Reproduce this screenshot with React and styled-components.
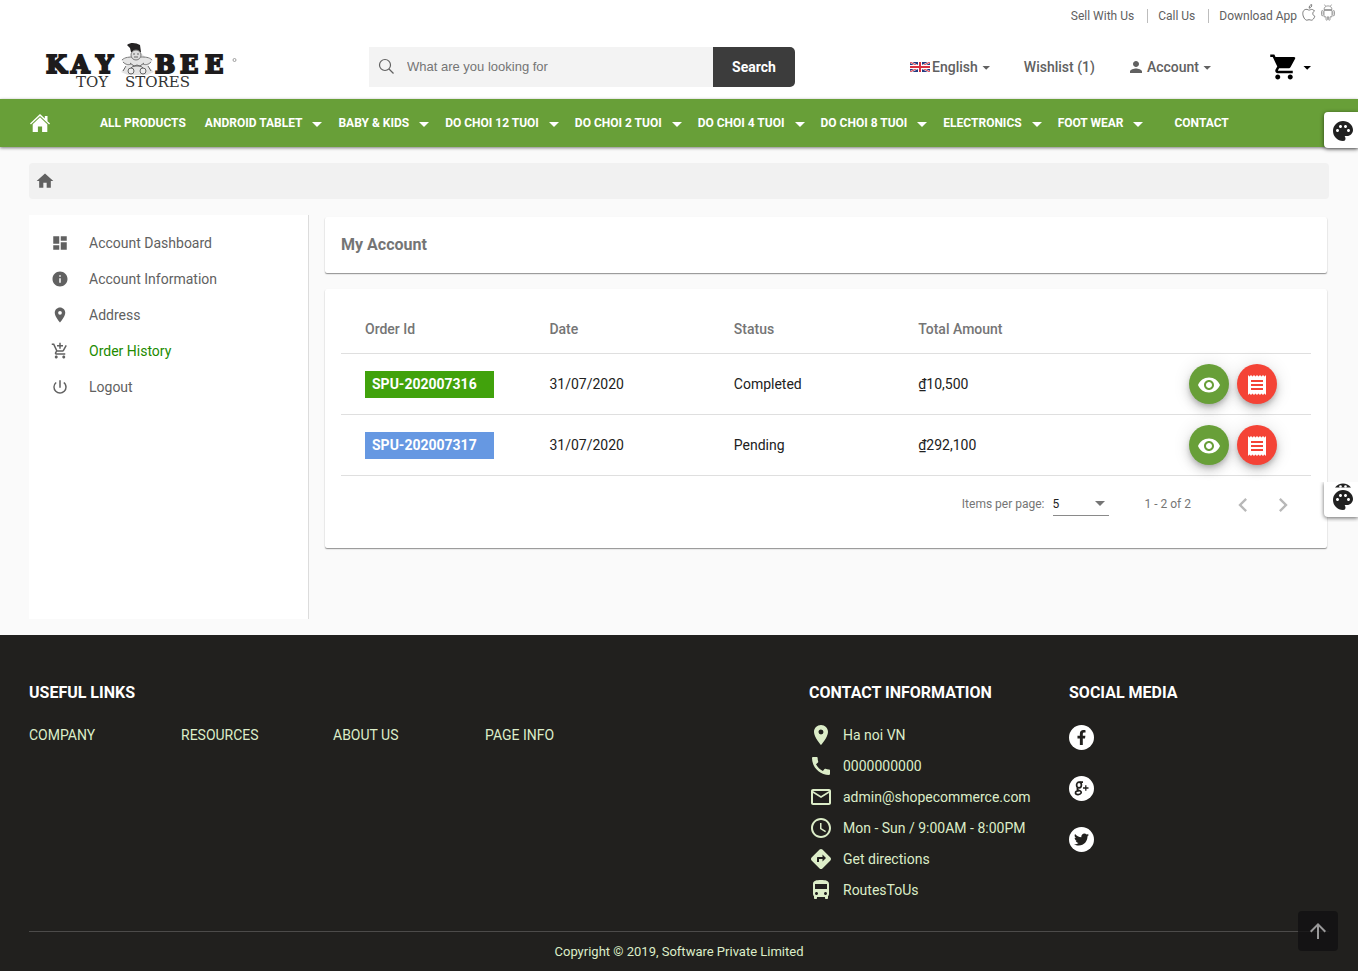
import React from "react";
import styled, { createGlobalStyle, css } from "styled-components";
import {
  MdDashboard, MdInfo, MdPlace, MdOutlineAddShoppingCart, MdPowerSettingsNew, MdHome, MdPerson,
  MdShoppingCart, MdVisibility, MdReceipt, MdPalette, MdChevronLeft, MdChevronRight, MdCall,
  MdMailOutline, MdAccessTime, MdDirections, MdDirectionsBus, MdArrowUpward,
} from "react-icons/md";
import { FaFacebookF, FaTwitter } from "react-icons/fa";

const GlobalStyle = createGlobalStyle`
  * { box-sizing: border-box; }
  body {
    margin: 0;
    background: #fafafa;
    color: #212121;
    font-family: Roboto, "Liberation Sans", sans-serif;
    font-size: 14px;
  }
  a { color: inherit; text-decoration: none; }
  button { font: inherit; color: inherit; border: 0; padding: 0; background: none; cursor: pointer; }
  h1, h2, h3, p, ul { margin: 0; padding: 0; }
  li { list-style: none; }
  svg { display: block; flex: none; }
`;

const Header = styled.header`background: #fff;`;

const TopBar = styled.div`
  display: flex;
  justify-content: flex-end;
  align-items: center;
  height: 32px;
  padding-right: 23px;
  font-size: 12px;
  line-height: 14px;
  color: #616161;
`;
const TopLink = styled.a`
  padding: 0 13px 0 10px;
  border-right: 1px solid #bdbdbd;
`;
const AppLinks = styled.div`
  display: flex;
  align-items: center;
  gap: 5px;
  padding-left: 10px;
`;
const StoreLink = styled.a`padding-bottom: 8px;`;

const MainBar = styled.div`
  display: flex;
  align-items: center;
  padding: 8px 45px 6px;
  height: 67px;
`;
const LogoLink = styled.a`
  flex: 0 0 324px;
`;
const SearchForm = styled.form`
  display: flex;
  flex: 0 1 426px;
  height: 40px;
`;
const SearchLabel = styled.label`
  display: flex;
  flex: 1;
  align-items: center;
  gap: 12px;
  padding-left: 9px;
  background: #f3f3f3;
`;
const SearchInput = styled.input`
  flex: 1;
  min-width: 0;
  border: 0;
  padding: 0;
  outline: 0;
  background: none;
  font: 13px "Liberation Sans", sans-serif;
  &::placeholder { color: #757575; opacity: 1; }
`;
const SearchButton = styled.button`
  width: 82px;
  border-radius: 0 5px 5px 0;
  background: #3c3c3c;
  color: #fff;
  font-weight: 700;
`;
const UserTools = styled.div`
  display: flex;
  flex: 1;
  justify-content: flex-end;
  align-items: center;
  gap: 32px;
  color: #616161;
  font-weight: 500;
`;
const ToolButton = styled.button`
  display: flex;
  align-items: center;
  gap: 2px;
  font-weight: 500;
`;
const CartButton = styled(ToolButton)`
  margin-left: 24px;
  color: #000;
`;

const Nav = styled.nav`
  position: relative;
  display: flex;
  align-items: center;
  height: 48px;
  padding-left: 30px;
  background: #689f38;
  color: #fff;
  font-size: 12px;
  font-weight: 700;
  box-shadow: 0 1px 3px rgba(0, 0, 0, 0.5);
`;
const NavHome = styled.a`margin-right: 40px;`;
const NavLink = styled.a`
  padding: 0 11px 0 ${(p) => (p.$wide ? 23 : 10)}px;
`;
const NavMenu = styled.button`
  display: flex;
  align-items: center;
  gap: 10px;
  padding: 0 8px;
  font-weight: 700;
`;

const Page = styled.main`padding: 16px 29px;`;
const Crumbs = styled.nav`
  display: flex;
  align-items: center;
  height: 36px;
  padding-left: 6px;
  border-radius: 4px;
  background: #f1f1f1;
  color: #616161;
`;
const Columns = styled.div`
  display: flex;
  gap: 16px;
  margin-top: 16px;
`;
const Sidebar = styled.nav`
  flex: 0 0 280px;
  min-height: 404px;
  padding: 10px 0;
  background: #fff;
  border-right: 1px solid #dcdcdc;
`;
const SideLink = styled.a`
  display: flex;
  align-items: center;
  gap: 20px;
  height: 36px;
  padding-left: 22px;
  color: ${(p) => (p.$active ? "#228b00" : "#616161")};
  svg { color: #616161; }
`;
const Content = styled.div`
  flex: 1;
  min-width: 0;
  padding: 2px 2px 0 0;
`;
const Card = styled.section`
  margin-bottom: 16px;
  padding: 16px;
  background: #fff;
  border-radius: 2px;
  box-shadow: 0 1px 1px rgba(0, 0, 0, 0.35), 0 1px 2px rgba(0, 0, 0, 0.12);
`;
const CardTitle = styled.h1`
  font-size: 16px;
  line-height: 24px;
  font-weight: 700;
  color: #757575;
`;
const Table = styled.table`
  display: block;
  width: 100%;
  thead, tbody { display: block; }
`;
const Row = styled.tr`
  display: grid;
  grid-template-columns: repeat(5, 1fr);
  align-items: center;
  height: ${(p) => (p.$head ? 49 : 61)}px;
  padding: 0 24px;
  border-bottom: 1px solid #dfdfdf;
`;
const HeadCell = styled.th`
  padding: 0;
  text-align: left;
  font-weight: 500;
  color: #757575;
`;
const Cell = styled.td`padding: 0;`;
const OrderTag = styled.span`
  display: block;
  width: 129px;
  padding: 0 7px;
  line-height: 27px;
  font-weight: 700;
  color: #fff;
  background: ${(p) => (p.$pending ? "#6698e2" : "#41a20c")};
`;
const Actions = styled.div`
  display: flex;
  justify-content: flex-end;
  gap: 8px;
  padding-right: 10px;
`;
const RoundButton = styled.button`
  display: grid;
  place-items: center;
  width: 40px;
  height: 40px;
  padding-top: 2px;
  border-radius: 50%;
  color: #fff;
  background: ${(p) => (p.$warn ? "#f44336" : "#689f38")};
  box-shadow: 0 3px 5px -1px rgba(0, 0, 0, 0.2), 0 6px 10px rgba(0, 0, 0, 0.14), 0 1px 18px rgba(0, 0, 0, 0.12);
`;
const Paginator = styled.div`
  display: flex;
  justify-content: flex-end;
  align-items: center;
  height: 56px;
  padding-right: 8px;
  font-size: 12px;
  color: #757575;
`;
const PageSize = styled.label`
  display: flex;
  align-items: center;
  gap: 8px;
`;
const SelectBox = styled.span`
  display: flex;
  align-items: center;
  width: 56px;
  height: 24px;
  border-bottom: 1px solid #8a8a8a;
`;
const SizeSelect = styled.select`
  appearance: none;
  flex: 1;
  min-width: 0;
  border: 0;
  padding: 0;
  background: none;
  font: inherit;
  color: #212121;
`;
const SelectArrow = styled.svg`margin-right: 4px;`;
const Range = styled.span`margin: 0 32px 0 36px;`;
const PageButton = styled.button`
  display: grid;
  place-items: center;
  width: 40px;
  height: 40px;
  padding-top: 2px;
  color: #b8b8b8;
`;

const Footer = styled.footer`
  padding: 47px 29px 11px;
  background: #21201e;
  color: #dcedc8;
`;
const FooterGrid = styled.div`
  display: grid;
  grid-template-columns: 60% 20% 20%;
  min-height: 249px;
`;
const FooterTitle = styled.h2`
  margin-bottom: 15px;
  font-size: 16px;
  line-height: 22px;
  font-weight: 700;
  color: #fff;
`;
const LinkColumns = styled.div`
  display: grid;
  grid-template-columns: repeat(5, 1fr);
  padding-right: 20px;
  line-height: 33px;
`;
const ContactRow = styled.li`
  display: flex;
  align-items: center;
  gap: 10px;
  height: 31px;
  white-space: nowrap;
`;
const SocialList = styled.div`
  display: flex;
  flex-direction: column;
  gap: 26px;
  padding-top: 6px;
`;
const SocialLink = styled.a`
  display: grid;
  place-items: center;
  width: 25px;
  height: 25px;
  border-radius: 50%;
  background: #fff;
  color: #21201e;
`;
const Copyright = styled.p`
  padding-top: 11px;
  border-top: 1px solid #4c4b4a;
  font-size: 13px;
  line-height: 17px;
  text-align: center;
`;

const PaletteTab = styled.button`
  position: fixed;
  right: 0;
  top: ${(p) => (p.$lower ? 482 : 112)}px;
  display: flex;
  flex-direction: column;
  align-items: center;
  justify-content: flex-end;
  width: 34px;
  height: ${(p) => (p.$lower ? 35 : 36)}px;
  padding: 0 0 5px 4px;
  background: #fff;
  color: #212121;
  border-radius: 4px 0 0 4px;
  box-shadow: 0 1px 4px rgba(0, 0, 0, 0.6);
  ${(p) => p.$lower && css`
    border-radius: 0 0 0 4px;
    clip-path: inset(0 0 -5px -5px);
  `}
`;
const ScrollTop = styled.button`
  position: fixed;
  right: 20px;
  bottom: 20px;
  display: grid;
  place-items: center;
  width: 40px;
  height: 40px;
  border-radius: 4px;
  background: rgba(18, 16, 18, 0.8);
  color: #9a999a;
`;

function Caret() {
  return (
    <svg width="12" height="8" viewBox="0 0 12 8" aria-hidden="true">
      <path d="M2.500 3h7.500L6.200 6.800z" fill="currentColor" />
    </svg>
  );
}

function NavArrow() {
  return (
    <svg width="10" height="7" viewBox="0 0 10 7" aria-hidden="true">
      <path d="M0 2h10L5 7z" fill="currentColor" />
    </svg>
  );
}

function PaletteTop() {
  return (
    <svg width="24" height="7" viewBox="0 0 24 7" aria-hidden="true">
      <path d="M4 6.500C6 3.600 9 2.500 12 2.500s6 1.100 8 4z" fill="currentColor" />
      <circle cx="9.500" cy="5.500" r="1.300" fill="#fff" />
      <circle cx="14.500" cy="5.500" r="1.300" fill="#fff" />
    </svg>
  );
}

function Logo() {
  return (
    <svg width="194" height="50" viewBox="0 -2 194 50" role="img" aria-label="Kay Bee Toy Stores">
      <g fontFamily="'DejaVu Serif', serif" fill="#1d1b1c">
        <g fontSize="24" fontWeight="700" stroke="#1d1b1c" strokeWidth="2">
          <text x="1" y="29">K</text>
          <text x="26" y="29">A</text>
          <text x="51" y="29">Y</text>
          <text x="110" y="29">B</text>
          <text x="135" y="29">E</text>
          <text x="160" y="29">E</text>
        </g>
        <text x="31" y="43" fontSize="15" fill="#333">TOY</text>
        <text x="80" y="43" fontSize="15" fill="#333">STORES</text>
      </g>
      <circle cx="189.500" cy="16" r="1.500" fill="none" stroke="#888" strokeWidth=".8" />
      <path d="M76 28l6-6-6-6 9-3 4-4h7l4 4 8 3-5 6 6 6-7 3H83z" fill="#e4e4e4" />
      <path d="M77 16c3-3 8-3 11-3M107 16c-3-3-7-3-11-3M78 18c3 3 6 3 8 2M106 18c-3 3-6 3-8 2" fill="none" stroke="#777" />
      <path d="M82 1c4-3 9-2 13 0l1 7H86l-1-4z" fill="#252324" />
      <circle cx="91" cy="11" r="5" fill="#ddd" stroke="#777" />
      <path d="M88 10h2M92 10h2M89 13h4M85 19l4 3h6l4-3M84 26l3-3 5-2 5 2 3 3M81 22l-3 5M103 22l3 5" fill="none" stroke="#666" />
      <circle cx="86" cy="27" r="3" fill="#eee" stroke="#666" />
      <circle cx="98" cy="27" r="3" fill="#eee" stroke="#666" />
    </svg>
  );
}

function AppleIcon() {
  return (
    <svg width="14" height="17" viewBox="0 0 14 17" fill="none" stroke="#777" aria-hidden="true">
      <path d="M12.500 7c-1-1.500-2.800-1.900-4-1.300-1 .5-1.700.5-2.600 0C3.500 4.600.800 6.200.8 9.500c0 3 2.100 6.700 4 6.700.8 0 1.300-.5 2.300-.5s1.500.5 2.300.5c1.500 0 2.900-2.200 3.400-3.900-2.500-1.200-2.700-4-.3-5.300zM7.200 4.200C7 2.400 8 .8 9.700.6c.2 1.800-.9 3.400-2.500 3.600z" />
    </svg>
  );
}

function AndroidIcon() {
  return (
    <svg width="14" height="17" viewBox="0 0 14 17" fill="none" stroke="#888" strokeWidth=".8" aria-hidden="true">
      <path d="M3 6.500h8v6.300H9v2.700c0 1-1.400 1-1.400 0v-2.700H6.400v2.700c0 1-1.400 1-1.400 0v-2.700H3zM3 5.500C3 .700 11 .700 11 5.500zM4.600 2.300L3.500.6M9.400 2.300L10.500.6M.5 7.500c0-1.300 1.600-1.300 1.600 0v3.300c0 1.300-1.600 1.300-1.600 0zM11.900 7.500c0-1.300 1.600-1.300 1.600 0v3.300c0 1.300-1.600 1.300-1.600 0z" />
    </svg>
  );
}

function Flag() {
  return (
    <svg width="20" height="10" viewBox="0 0 20 10" aria-hidden="true">
      <path fill="#253b80" d="M0 0h20v10H0z" />
      <path stroke="#fff" strokeWidth="2" d="M0 0l20 10M20 0L0 10" />
      <path stroke="#d8303f" d="M0 0l20 10M20 0L0 10" />
      <path stroke="#fff" strokeWidth="4" d="M10 0v10M0 5h20" />
      <path stroke="#d8303f" strokeWidth="2" d="M10 0v10M0 5h20" />
    </svg>
  );
}

function SearchIcon() {
  return (
    <svg width="17" height="17" viewBox="0 0 17 17" fill="none" stroke="#616161" strokeWidth="1.200" aria-hidden="true">
      <circle cx="7" cy="7" r="5.500" />
      <path d="M11 11l4.500 4.500" />
    </svg>
  );
}

function HouseIcon() {
  return (
    <svg width="20" height="18" viewBox="0 0 20 18" fill="currentColor" aria-hidden="true">
      <path d="M10 0l4.800 4.600V2h2.700v5.200L20 9.600l-.9.900L10 1.900.900 10.500 0 9.600z" />
      <path d="M10 3.300l7.300 7V18h-5.200v-5.600H7.900V18H2.700v-7.700z" />
    </svg>
  );
}

const menus = ["ANDROID TABLET", "BABY & KIDS", "DO CHOI 12 TUOI", "DO CHOI 2 TUOI", "DO CHOI 4 TUOI", "DO CHOI 8 TUOI", "ELECTRONICS", "FOOT WEAR"];
const sideLinks = [
  [MdDashboard, "Account Dashboard"],
  [MdInfo, "Account Information"],
  [MdPlace, "Address"],
  [MdOutlineAddShoppingCart, "Order History"],
  [MdPowerSettingsNew, "Logout"],
];
const orders = [
  { id: "SPU-202007316", date: "31/07/2020", status: "Completed", total: "₫10,500" },
  { id: "SPU-202007317", date: "31/07/2020", status: "Pending", total: "₫292,100" },
];
const contacts = [
  [MdPlace, "Ha noi VN"],
  [MdCall, "0000000000"],
  [MdMailOutline, "admin@shopecommerce.com"],
  [MdAccessTime, "Mon - Sun / 9:00AM - 8:00PM"],
  [MdDirections, "Get directions"],
  [MdDirectionsBus, "RoutesToUs"],
];

export default function App() {
  return (
    <>
      <GlobalStyle />
      <Header>
        <TopBar>
          <TopLink href="#sell">Sell With Us</TopLink>
          <TopLink href="#call">Call Us</TopLink>
          <AppLinks>
            Download App
            <StoreLink href="#ios" aria-label="App for iPhone"><AppleIcon /></StoreLink>
            <StoreLink href="#android" aria-label="App for Android"><AndroidIcon /></StoreLink>
          </AppLinks>
        </TopBar>
        <MainBar>
          <LogoLink href="#home"><Logo /></LogoLink>
          <SearchForm>
            <SearchLabel>
              <SearchIcon />
              <SearchInput aria-label="Search products" placeholder="What are you looking for" />
            </SearchLabel>
            <SearchButton type="button">Search</SearchButton>
          </SearchForm>
          <UserTools>
            <ToolButton><Flag />English<Caret /></ToolButton>
            <a href="#wishlist">Wishlist (1)</a>
            <ToolButton><MdPerson size={18} />Account<Caret /></ToolButton>
            <CartButton aria-label="Cart"><MdShoppingCart size={30} /><Caret /></CartButton>
          </UserTools>
        </MainBar>
      </Header>
      <Nav aria-label="Categories">
        <NavHome href="#home" aria-label="Home"><HouseIcon /></NavHome>
        <NavLink href="#all">ALL PRODUCTS</NavLink>
        {menus.map((name) => (
          <NavMenu key={name}>{name}<NavArrow /></NavMenu>
        ))}
        <NavLink href="#contact" $wide>CONTACT</NavLink>
      </Nav>

      <Page>
        <Crumbs aria-label="Breadcrumb"><a href="#home" aria-label="Home"><MdHome size={20} /></a></Crumbs>
        <Columns>
          <Sidebar aria-label="Account">
            {sideLinks.map(([Icon, name]) => (
              <SideLink key={name} href="#account" $active={name === "Order History"}>
                <Icon size={18} />{name}
              </SideLink>
            ))}
          </Sidebar>
          <Content>
            <Card><CardTitle>My Account</CardTitle></Card>
            <Card>
              <Table>
                <thead>
                  <Row $head>
                    <HeadCell>Order Id</HeadCell>
                    <HeadCell>Date</HeadCell>
                    <HeadCell>Status</HeadCell>
                    <HeadCell>Total Amount</HeadCell>
                    <HeadCell />
                  </Row>
                </thead>
                <tbody>
                  {orders.map((o) => (
                    <Row key={o.id}>
                      <Cell><OrderTag $pending={o.status === "Pending"}>{o.id}</OrderTag></Cell>
                      <Cell>{o.date}</Cell>
                      <Cell>{o.status}</Cell>
                      <Cell>{o.total}</Cell>
                      <Cell>
                        <Actions>
                          <RoundButton aria-label="View order"><MdVisibility size={24} /></RoundButton>
                          <RoundButton $warn aria-label="Receipt"><MdReceipt size={24} /></RoundButton>
                        </Actions>
                      </Cell>
                    </Row>
                  ))}
                </tbody>
              </Table>
              <Paginator>
                <PageSize>
                  Items per page:
                  <SelectBox>
                    <SizeSelect defaultValue="5"><option>5</option></SizeSelect>
                    <SelectArrow width="10" height="5" viewBox="0 0 10 5" aria-hidden="true">
                      <path d="M0 0h10L5 5z" fill="#757575" />
                    </SelectArrow>
                  </SelectBox>
                </PageSize>
                <Range>1 - 2 of 2</Range>
                <PageButton aria-label="Previous page"><MdChevronLeft size={28} /></PageButton>
                <PageButton aria-label="Next page"><MdChevronRight size={28} /></PageButton>
              </Paginator>
            </Card>
          </Content>
        </Columns>
      </Page>

      <Footer>
        <FooterGrid>
          <section>
            <FooterTitle>USEFUL LINKS</FooterTitle>
            <LinkColumns>
              <a href="#company">COMPANY</a>
              <a href="#resources">RESOURCES</a>
              <a href="#about">ABOUT US</a>
              <a href="#info">PAGE INFO</a>
            </LinkColumns>
          </section>
          <section>
            <FooterTitle>CONTACT INFORMATION</FooterTitle>
            <ul>
              {contacts.map(([Icon, text]) => (
                <ContactRow key={text}><Icon size={24} />{text}</ContactRow>
              ))}
            </ul>
          </section>
          <section>
            <FooterTitle>SOCIAL MEDIA</FooterTitle>
            <SocialList>
              <SocialLink href="#facebook" aria-label="Facebook"><FaFacebookF size={15} /></SocialLink>
              <SocialLink href="#google" aria-label="Google Plus">
                <svg width="17" height="17" viewBox="0 0 17 17" fill="none" stroke="currentColor" strokeWidth="1.700">
                  <ellipse cx="6" cy="5" rx="2.400" ry="2.800" />
                  <path d="M6.500 2.200H10M5 8c-1.500 1-.5 1.800.8 2.300 2 .7 2.900 1.600 2.200 2.900-1 1.900-5.300 1.700-5.500-.1-.2-1.600 1.500-2.400 3.800-2.400" />
                  <path d="M10 8h5.500M12.800 5.200v5.600" strokeWidth="1.300" />
                </svg>
              </SocialLink>
              <SocialLink href="#twitter" aria-label="Twitter"><FaTwitter size={15} /></SocialLink>
            </SocialList>
          </section>
        </FooterGrid>
        <Copyright>Copyright © 2019, Software Private Limited</Copyright>
      </Footer>

      <PaletteTab aria-label="Theme colours"><MdPalette size={24} /></PaletteTab>
      <PaletteTab $lower aria-label="More theme colours">
        <PaletteTop />
        <MdPalette size={24} />
      </PaletteTab>
      <ScrollTop aria-label="Back to top"><MdArrowUpward size={24} /></ScrollTop>
    </>
  );
}
